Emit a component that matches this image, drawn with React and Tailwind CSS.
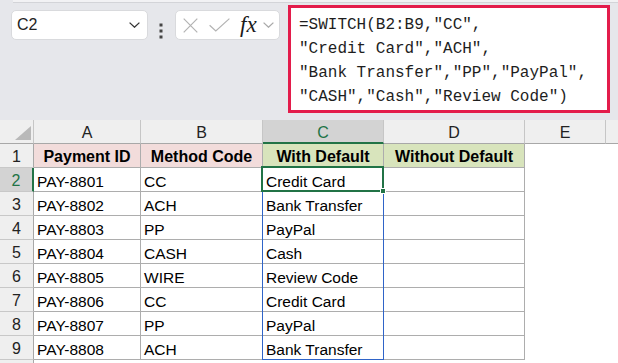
const SANS = { fontFamily: '"Liberation Sans", Arial, sans-serif' };

const ROWS = [
  ["PAY-8801", "CC", "Credit Card"],
  ["PAY-8802", "ACH", "Bank Transfer"],
  ["PAY-8803", "PP", "PayPal"],
  ["PAY-8804", "CASH", "Cash"],
  ["PAY-8805", "WIRE", "Review Code"],
  ["PAY-8806", "CC", "Credit Card"],
  ["PAY-8807", "PP", "PayPal"],
  ["PAY-8808", "ACH", "Bank Transfer"],
];

const FORMULA = [
  '=SWITCH(B2:B9,"CC",',
  '"Credit Card","ACH",',
  '"Bank Transfer","PP","PayPal",',
  '"CASH","Cash","Review Code")',
];

function Chevron({ className, color = "#333" }) {
  return (
    <svg width="11" height="6" viewBox="0 0 11 6" className={className}>
      <path d="M0.6 0.6 L5.5 5.2 L10.4 0.6" fill="none" stroke={color} strokeWidth="1.3" />
    </svg>
  );
}

function TopBar() {
  return (
    <div className="flex h-[120px] flex-col bg-[#e6e7eb]">
      <div className="ml-[13px] h-[3px] border-b border-[#d3d4d8] bg-[#f2f2f4]" />
      <div className="flex items-start pt-[2px] pl-[11px]">
        <div className="mt-[5px] flex h-[30px] w-[137px] items-center justify-between rounded-[5px] border border-[#d9dadd] bg-white pr-[7px] pl-[5px]">
          <span className="text-[16px] leading-[28px] text-[#222]" style={SANS}>
            C2
          </span>
          <Chevron />
        </div>

        <svg width="4" height="16" viewBox="0 0 4 16" className="mt-[18px] ml-[11px]">
          <rect x="0.5" y="0.5" width="3" height="3" fill="#454545" />
          <rect x="0.5" y="6.5" width="3" height="3" fill="#454545" />
          <rect x="0.5" y="12.5" width="3" height="3" fill="#454545" />
        </svg>

        <div className="mt-[5px] ml-[12px] flex h-[30px] w-[105px] items-center rounded-[5px] border border-[#d9dadd] bg-white pl-[7px]">
          <svg width="15" height="15" viewBox="0 0 15 15">
            <path d="M0.7 0.7 L14.3 14.3 M14.3 0.7 L0.7 14.3" stroke="#b3b3b3" strokeWidth="1.2" />
          </svg>
          <svg width="21" height="14" viewBox="0 0 21 14" className="ml-[11px]">
            <path d="M0.6 7.2 L6.8 13 L20.4 0.6" fill="none" stroke="#b3b3b3" strokeWidth="1.2" />
          </svg>
          <span
            className="ml-[10px] text-[23px] leading-[28px] text-[#1a1a1a] italic"
            style={{ fontFamily: '"Liberation Serif", "Times New Roman", serif' }}
          >
            fx
          </span>
          <Chevron className="ml-[6px]" color="#a9a9a9" />
        </div>

        <div className="ml-[8px] h-[108px] w-[322px] border-[3px] border-[#e31c4b] bg-white pt-[5px] pl-[8px]">
          {FORMULA.map((line) => (
            <div
              key={line}
              className="text-[16px] leading-[24px] whitespace-pre text-[#1e1e1e]"
              style={{ fontFamily: '"Liberation Mono", "Courier New", monospace' }}
            >
              {line}
            </div>
          ))}
        </div>
      </div>
    </div>
  );
}

const COL_W = ["w-[107px]", "w-[122px]", "w-[121px]", "w-[141px]"];

function HeaderRow() {
  const letters = ["A", "B", "C", "D"];
  return (
    <div className="flex h-[24px] bg-[#efefef] text-[16px] leading-[23px] text-[#222]" style={SANS}>
      <div className="relative w-[34px] shrink-0 border-r border-b border-r-[#c6c6c6] border-b-[#a8a8a8]">
        <svg width="16" height="14" viewBox="0 0 16 14" className="absolute right-[2px] bottom-[3px]">
          <path d="M16 0 L16 14 L0 14 Z" fill="#b9b9b9" />
        </svg>
      </div>
      {letters.map((l, i) => {
        const active = l === "C";
        return (
          <div
            key={l}
            className={`${COL_W[i]} shrink-0 border-r border-r-[#c6c6c6] pt-[1px] text-center ${
              active
                ? "border-b-2 border-b-[#217346] bg-[#d3d3d3] text-[#217346]"
                : "border-b border-b-[#a8a8a8]"
            }`}
          >
            {l}
          </div>
        );
      })}
      <div className="w-[81px] shrink-0 border-r border-b border-r-[#c6c6c6] border-b-[#a8a8a8] pt-[1px] text-center">
        E
      </div>
      <div className="flex-1 border-b border-b-[#a8a8a8]" />
    </div>
  );
}

function RowHead({ n, active }) {
  return (
    <div
      className={`w-[34px] shrink-0 border-b border-b-[#c8c8c8] pt-[1px] text-center text-[16px] ${
        active
          ? "border-r-2 border-r-[#217346] bg-[#d3d3d3] text-[#217346]"
          : "border-r border-r-[#a8a8a8] bg-[#efefef] text-[#222]"
      }`}
    >
      {n}
    </div>
  );
}

function TitleRow() {
  const titles = [
    ["Payment ID", "bg-[#f2dcdb]"],
    ["Method Code", "bg-[#f2dcdb]"],
    ["With Default", "bg-[#d8e4bc]"],
    ["Without Default", "bg-[#d8e4bc]"],
  ];
  return (
    <div className="flex h-[24px] leading-[23px]" style={SANS}>
      <RowHead n={1} />
      {titles.map(([t, bg], i) => (
        <div
          key={t}
          className={`${COL_W[i]} ${bg} shrink-0 border-r border-b border-[#adadad] pt-[1px] text-center text-[16px] font-bold text-black`}
        >
          {t}
        </div>
      ))}
      <div className="flex-1 bg-white" />
    </div>
  );
}

function DataRow({ n, cells }) {
  return (
    <div className="flex h-[24px] leading-[23px]" style={SANS}>
      <RowHead n={n} active={n === 2} />
      {[...cells, ""].map((c, i) => (
        <div
          key={i}
          className={`${COL_W[i]} shrink-0 overflow-hidden border-r border-b border-[#adadad] bg-white pt-[2px] pl-[3px] text-[15.5px] whitespace-nowrap text-black`}
        >
          {c}
        </div>
      ))}
      <div className="flex-1 bg-white" />
    </div>
  );
}

export default function App() {
  return (
    <div className="h-[363px] w-[618px] overflow-hidden bg-white">
      <TopBar />
      <div className="relative">
        <HeaderRow />
        <TitleRow />
        {ROWS.map((r, i) => (
          <DataRow key={i} n={i + 2} cells={r} />
        ))}
        <div className="flex h-[4px]">
          <div className="w-[34px] border-r border-r-[#a8a8a8] bg-[#efefef]" />
        </div>

        {/* spill range outline */}
        <div className="pointer-events-none absolute top-[46px] left-[262px] h-[194px] w-[122px] border border-[#2f64c8]" />
        {/* active cell */}
        <div className="pointer-events-none absolute top-[46px] left-[261px] h-[26px] w-[123px] border-2 border-[#217346]" />
        <div className="pointer-events-none absolute top-[68px] left-[380px] h-[6px] w-[6px] border border-white bg-[#217346]" />
      </div>
    </div>
  );
}
